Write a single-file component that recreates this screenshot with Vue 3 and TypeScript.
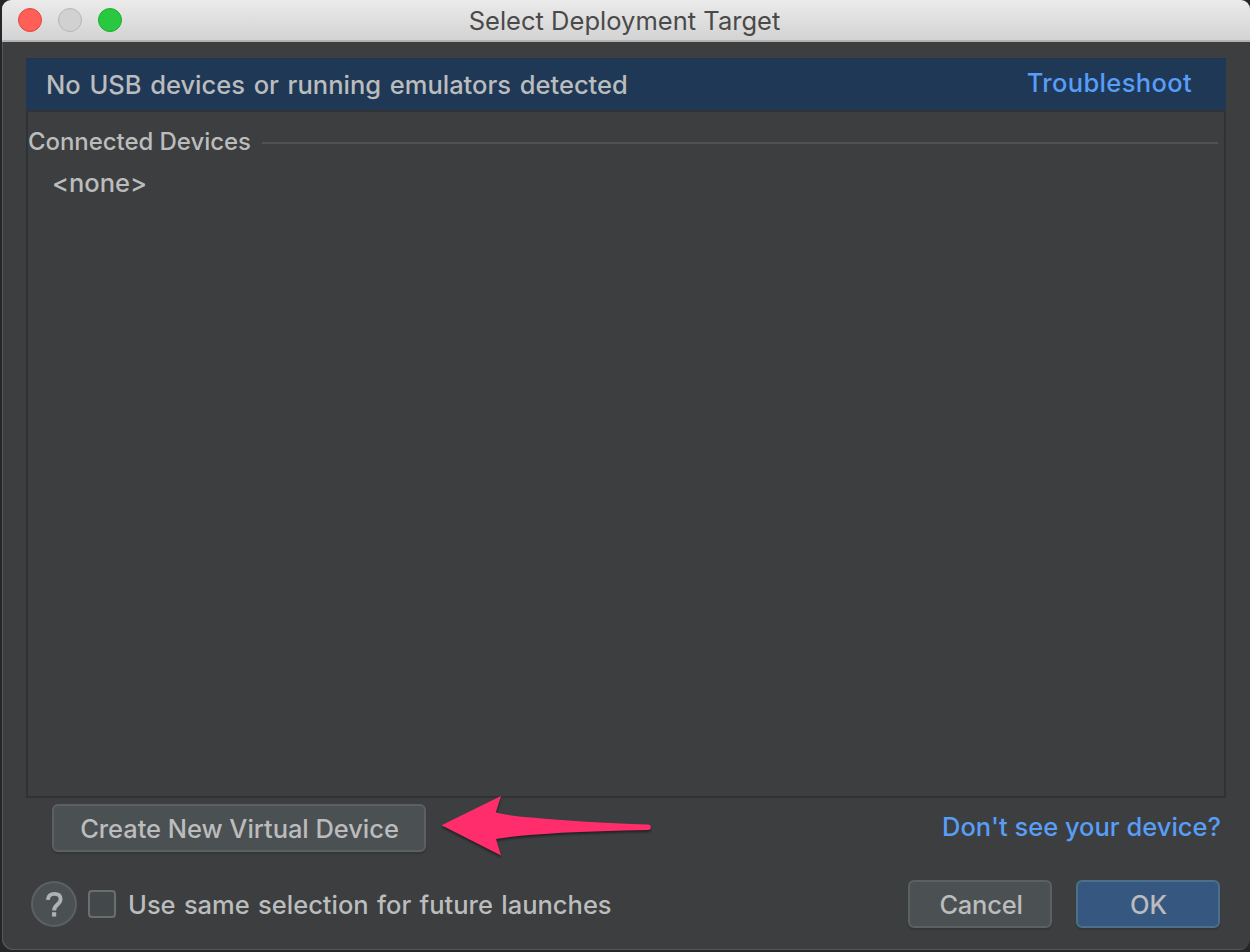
<script setup lang="ts">
import { ref } from 'vue'

const controls: string[] = ['close', 'minimize', 'zoom']
const sameSelection = ref<boolean>(false)
</script>

<template>
  <div class="desktop">
    <main class="window">
      <header class="titlebar">
        <div class="controls">
          <span v-for="c in controls" :key="c" class="dot" :class="c"></span>
        </div>
        <h1 class="title"><span>Select Deployment Target</span></h1>
      </header>

      <section class="banner">
        <span class="message">No USB devices or running emulators detected</span>
        <a class="link troubleshoot">Troubleshoot</a>
      </section>

      <section class="devices">
        <div class="group">
          <span class="group-name">Connected Devices</span>
          <span class="rule"></span>
        </div>
        <div class="empty"><span>&lt;none&gt;</span></div>
      </section>

      <section class="create-row">
        <button class="btn create"><span>Create New Virtual Device</span></button>
        <svg class="arrow" width="220" height="70" viewBox="0 0 220 70">
          <path d="M4.500 33.200L64 4L58.800 20.500Q73 23.800 95 25.500Q145 30.500 211 32.500A2.700 2.700 0 0 1 211 38Q100 40 59 47L64 63.500Z" />
        </svg>
        <a class="link help-link">Don't see your device?</a>
      </section>

      <footer class="footer">
        <button class="help" aria-label="Help">
          <svg width="46" height="46" viewBox="0 0 46 46">
            <path d="M16.800 18.900Q17.400 12.900 23.300 12.900Q29.600 12.900 29.600 18.300Q29.600 21.100 26.300 23.600Q23.100 26.100 23.100 29.500" fill="none" stroke="#afb1b3" stroke-width="3.900" />
            <rect x="21" y="31.200" width="4.200" height="4.300" fill="#afb1b3" />
          </svg>
        </button>
        <label class="check">
          <input v-model="sameSelection" type="checkbox" />
          <span class="check-text">Use same selection for future launches</span>
        </label>
        <button class="btn cancel"><span>Cancel</span></button>
        <button class="btn ok"><span>OK</span></button>
      </footer>
    </main>
  </div>
</template>

<style>
html, body { margin: 0; background: #242628; }
</style>

<style scoped>
* { box-sizing: border-box; }
.desktop {
  width: 1250px;
  height: 952px;
  padding-left: 2px;
  background: #242628;
  overflow: hidden;
  font-family: Inter, "Liberation Sans", sans-serif;
  font-size: 25.5px;
  font-weight: 450;
  line-height: 32px;
  color: #bbbcbd;
  white-space: nowrap;
}
.window {
  height: 950px;
  background: #3c3e3f;
  border-radius: 9px 9px 11px 11px;
  box-shadow: inset 1px -1px 0 #55585a;
  overflow: hidden;
}
.titlebar {
  height: 42px;
  display: grid;
  grid-template-columns: 122px 1fr 124px;
  align-items: center;
  background: linear-gradient(#ebebeb, #d3d3d3);
  border-bottom: 2px solid #b4b4b4;
}
.controls { display: flex; gap: 16px; padding-left: 16px; }
.dot { width: 24px; height: 24px; border-radius: 50%; border: 1px solid; flex: none; }
.close { background: #ff5f57; border-color: #e2463f; }
.minimize { background: #d1d1d1; border-color: #b5b5b5; }
.zoom { background: #28c840; border-color: #1dad2b; }
.title { margin: 2px 1px 0 0; font-size: 25.5px; font-weight: 400; color: #4a4a4a; text-align: center; letter-spacing: 0.02px; }
.banner {
  margin: 16px 24px 0;
  height: 52px;
  padding: 1px 34px 0 20px;
  display: flex;
  justify-content: space-between;
  align-items: center;
  background: #1f3856;
  border-top: 1px solid #20344d;
}
.message { word-spacing: 1.9px; }
.link { color: #589df6; }
.troubleshoot { margin-top: -4px; letter-spacing: 0.35px; }
.devices {
  height: 688px;
  margin: 0 24px;
  border: 2px solid #303234;
  padding-right: 6px;
}
.group { display: flex; align-items: center; height: 32px; margin-top: 14px; gap: 12px; font-size: 24px; }
.group-name { width: 222px; letter-spacing: -0.06px; }
.rule { flex: 1; height: 2px; margin-top: 2px; background: #505254; }
.empty { margin: 9px 0 0 24px; }
.create-row { display: flex; align-items: center; height: 66px; margin-top: 0; padding: 0 29px 0 50px; }
.btn {
  font: inherit;
  color: #bbbcbd;
  background: #4b5052;
  border: 2px solid #5c6062;
  border-radius: 6px;
  padding: 2px 0 0;
  height: 48px;
  flex: none;
  box-shadow: 0 2px 1px #343638;
}
.create { width: 374px; margin-top: -7px; padding-left: 1px; letter-spacing: -0.05px; }
.arrow { margin: -8px 0 0 11px; flex: none; filter: drop-shadow(0 2px 1px #202224); }
.arrow path { fill: #ff2d6b; }
.help-link { margin: -8px 0 0 auto; }
.footer { display: flex; align-items: center; height: 48px; margin-top: 16px; padding: 0 30px 0 29px; }
.help {
  width: 46px;
  height: 46px;
  padding: 0;
  border: 2px solid #5c6062;
  border-radius: 50%;
  background: #4b5052;
  display: flex;
  align-items: center;
  justify-content: center;
  flex: none;
}
.help svg { flex: none; }
.check { display: flex; align-items: center; margin-left: 11px; gap: 12px; }
.check-text { padding-top: 2px; word-spacing: 1.5px; }
.check input {
  appearance: none;
  width: 28px;
  height: 28px;
  margin: 0;
  border: 2px solid #6b6e6f;
  border-radius: 4px;
  background: #43494a;
}
.cancel { width: 144px; margin-left: auto; padding-left: 2px; letter-spacing: -0.25px; }
.ok { width: 144px; margin-left: 24px; padding-left: 1px; background: #365880; border-color: #4c708c; }
</style>
